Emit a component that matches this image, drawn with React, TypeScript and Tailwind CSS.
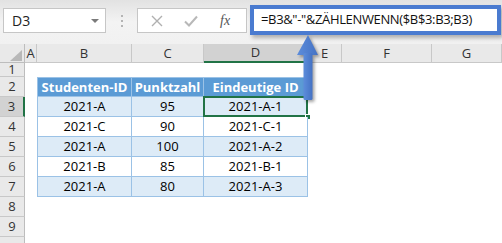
import React from "react";

type Row = { id: string; pts: string; uid: string };

const data: Row[] = [
  { id: "2021-A", pts: "95", uid: "2021-A-1" },
  { id: "2021-C", pts: "90", uid: "2021-C-1" },
  { id: "2021-A", pts: "100", uid: "2021-A-2" },
  { id: "2021-B", pts: "85", uid: "2021-B-1" },
  { id: "2021-A", pts: "80", uid: "2021-A-3" },
];

const cols = ["A", "B", "C", "D", "E", "F", "G"];

function RowHead({ n, active }: { n?: number; active?: boolean }) {
  return (
    <div
      className={
        "flex items-center justify-center border-b border-[#c8c8c8] text-[13px] leading-none text-[#333] " +
        (active
          ? "bg-[#d2d2d2] border-r-2 border-r-[#217346]"
          : "bg-[#e9e9e9] border-r border-r-[#bdbdbd]")
      }
    >
      {n}
    </div>
  );
}

function Blank() {
  return <div className="bg-white" />;
}

function TableCell({
  text,
  variant,
  first,
  children,
}: {
  text: string;
  variant: "head" | "band" | "plain";
  first?: boolean;
  children?: React.ReactNode;
}) {
  const bg =
    variant === "head"
      ? "bg-[#5b9bd5] text-white font-bold"
      : variant === "band"
        ? "bg-[#ddebf7] text-black"
        : "bg-white text-black";
  return (
    <div
      className={
        "relative flex items-center justify-center border-r border-b border-[#9bc2e6] text-[13px] leading-none " +
        bg +
        (first ? " border-l" : "") +
        (variant === "head" ? " border-t" : "")
      }
    >
      {text}
      {children}
    </div>
  );
}

export default function App() {
  return (
    <div
      className="relative h-[243px] w-[502px] overflow-hidden bg-white"
      style={{ fontFamily: '"Open Sans", "Noto Sans", sans-serif' }}
    >
      {/* formula bar strip */}
      <div className="flex h-[44px] items-start bg-gradient-to-b from-[#e2e2e2] via-[#f3f3f3] to-[#f1f1f1] pl-[3px]">
        {/* name box */}
        <div className="mt-[8px] flex h-[25px] w-[103px] items-center justify-between border border-[#c6c6c6] bg-white pl-[8px] pr-[6px]">
          <span className="text-[14px] text-[#222]">D3</span>
          <span className="h-0 w-0 border-x-[4px] border-t-[4px] border-x-transparent border-t-[#7a7a7a]" />
        </div>
        {/* grip dots */}
        <div className="mt-[15px] ml-[14px] flex w-[4px] flex-col items-center gap-[3px]">
          <span className="h-[2px] w-[2px] bg-[#b4b4b4]" />
          <span className="h-[2px] w-[2px] bg-[#b4b4b4]" />
          <span className="h-[2px] w-[2px] bg-[#b4b4b4]" />
        </div>
        {/* cancel / enter / function */}
        <div className="mt-[8px] ml-[13px] flex h-[25px] w-[110px] items-center border border-[#c6c6c6] bg-white">
          <svg width="12" height="12" viewBox="0 0 12 12" className="ml-[13px]">
            <path d="M1 1 L11 11 M11 1 L1 11" stroke="#b0b0b0" strokeWidth="1.4" fill="none" />
          </svg>
          <svg width="14" height="12" viewBox="0 0 14 12" className="ml-[21px]">
            <path d="M1 6.5 L5 10.5 L13 1.5" stroke="#b8b8b8" strokeWidth="2" fill="none" />
          </svg>
          <span
            className="ml-[22px] text-[14px] italic leading-none text-[#555]"
            style={{ fontFamily: '"Liberation Serif", serif' }}
          >
            fx
          </span>
        </div>
        {/* formula input */}
        <div className="mt-[5px] ml-[3px] flex h-[30px] w-[251px] items-center border-[4px] border-[#4a7bd0] bg-white pl-[7px] shadow-[2px_3px_4px_rgba(0,0,0,0.28)]">
          <span className="whitespace-nowrap text-[13px] tracking-[-0.35px] text-[#111]">
            =B3&amp;"-"&amp;ZÄHLENWENN($B$3:B3;B3)
          </span>
        </div>
      </div>

      {/* sheet grid */}
      <div className="grid grid-cols-[25px_12px_95px_72px_104px_34px_90px_1fr] grid-rows-[19px_14px_repeat(9,20px)]">
        {/* corner */}
        <div className="relative border-r border-b border-[#bdbdbd] bg-[#e9e9e9]">
          <svg width="25" height="19" className="absolute left-0 top-0">
            <polygon points="10,17 22,17 22,6" fill="#b8b8b8" />
          </svg>
        </div>
        {cols.map((c) => (
          <div
            key={c}
            className={
              "flex items-center justify-center text-[13px] leading-none text-[#333] " +
              (c === "D"
                ? "bg-[#d2d2d2] border-r border-r-[#bdbdbd] border-b-2 border-b-[#217346]"
                : "bg-[#e9e9e9] border-r border-b border-[#c8c8c8]")
            }
          >
            {c}
          </div>
        ))}

        {/* row 1 */}
        <RowHead n={1} />
        {cols.map((c) => (
          <Blank key={"r1" + c} />
        ))}

        {/* row 2: table header */}
        <RowHead n={2} />
        <Blank />
        <TableCell text="Studenten-ID" variant="head" first />
        <TableCell text="Punktzahl" variant="head" />
        <TableCell text="Eindeutige ID" variant="head" />
        <Blank />
        <Blank />
        <Blank />

        {/* data rows */}
        {data.map((r, i) => {
          const v = i % 2 === 0 ? "band" : "plain";
          return (
            <React.Fragment key={i}>
              <RowHead n={i + 3} active={i === 0} />
              <Blank />
              <TableCell text={r.id} variant={v} first />
              <TableCell text={r.pts} variant={v} />
              <TableCell text={r.uid} variant={v}>
                {i === 0 && (
                  <>
                    <div className="pointer-events-none absolute -left-[1px] -top-[1px] -right-[1px] -bottom-[1px] border-2 border-[#217346]" />
                    <div className="absolute -bottom-[4px] -right-[4px] h-[6px] w-[6px] border border-white bg-[#217346]" />
                  </>
                )}
              </TableCell>
              <Blank />
              <Blank />
              <Blank />
            </React.Fragment>
          );
        })}

        {/* rows 8 and 9, then the top edge of the next row */}
        {[8, 9, 0].map((n) => (
          <React.Fragment key={n}>
            <RowHead n={n || undefined} />
            {cols.map((c) => (
              <Blank key={n + c} />
            ))}
          </React.Fragment>
        ))}
      </div>

      {/* callout arrow from D3 up to the formula */}
      <svg
        width="30"
        height="72"
        viewBox="0 0 30 72"
        className="absolute left-[294px] top-[33px] drop-shadow-[2px_2px_1.5px_rgba(0,0,0,0.35)]"
      >
        <defs>
          <linearGradient id="shaft" x1="0" x2="1" y1="0" y2="0">
            <stop offset="0" stopColor="#5d8ddb" />
            <stop offset="1" stopColor="#4472c4" />
          </linearGradient>
        </defs>
        <polygon points="3,22 14,2 24,22" fill="url(#shaft)" />
        <rect x="9.5" y="20" width="9" height="47" rx="1.5" fill="url(#shaft)" />
      </svg>
    </div>
  );
}
